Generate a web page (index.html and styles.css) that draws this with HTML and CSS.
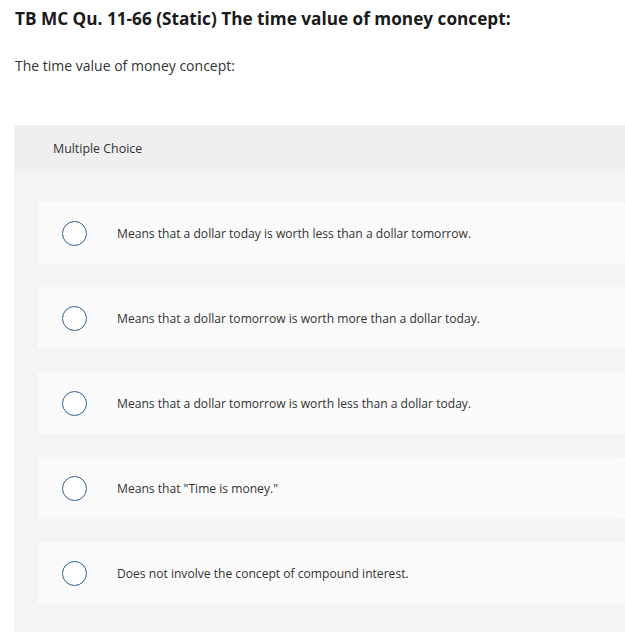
FILE: index.html
```html
<!DOCTYPE html>
<html>
<head>
<meta charset="utf-8">
<link rel="stylesheet" href="styles.css">
</head>
<body>
<div class="page">
  <h1 class="title">TB MC Qu. 11-66 (Static) The time value of money concept:</h1>
  <p class="prompt">The time value of money concept:</p>
  <section class="panel">
    <div class="panel-head">Multiple Choice</div>
    <div class="panel-body">
      <div class="option"><span class="radio"></span><span class="label">Means that a dollar today is worth less than a dollar tomorrow.</span></div>
      <div class="option"><span class="radio"></span><span class="label">Means that a dollar tomorrow is worth more than a dollar today.</span></div>
      <div class="option"><span class="radio"></span><span class="label">Means that a dollar tomorrow is worth less than a dollar today.</span></div>
      <div class="option"><span class="radio"></span><span class="label">Means that "Time is money."</span></div>
      <div class="option"><span class="radio"></span><span class="label">Does not involve the concept of compound interest.</span></div>
    </div>
  </section>
</div>
</body>
</html>
```

FILE: styles.css
```css
html, body {
  margin: 0;
  padding: 0;
  background: #ffffff;
  overflow: hidden;
}
.page {
  padding-left: 14px;
  font-family: "Open Sans", "Liberation Sans", sans-serif;
  color: #333333;
}
.title {
  margin: 0;
  padding: 8px 0 0 1px;
  font-size: 17.2px;
  line-height: 22px;
  font-weight: 700;
  color: #1a1a1a;
}
.prompt {
  margin: 0;
  padding: 27px 0 0 1px;
  font-size: 14px;
  line-height: 18px;
  color: #333333;
}
.panel {
  margin-top: 50px;
}
.panel-head {
  background: #efefef;
  height: 47px;
  display: flex;
  align-items: center;
  padding-left: 39px;
  font-size: 12.4px;
  color: #333333;
}
.panel-body {
  background: #f4f4f4;
  padding: 30px 0 40px 24px;
  display: flex;
  flex-direction: column;
  gap: 23px;
}
.option {
  background: #fafafa;
  border-radius: 3px;
  height: 62px;
  display: flex;
  align-items: center;
  padding-left: 24px;
}
.radio {
  width: 23px;
  height: 23px;
  border: 1.5px solid #2f6190;
  border-radius: 50%;
  background: #ffffff;
  flex: none;
}
.label {
  margin-left: 30px;
  font-size: 12.1px;
  color: #333333;
}
```
